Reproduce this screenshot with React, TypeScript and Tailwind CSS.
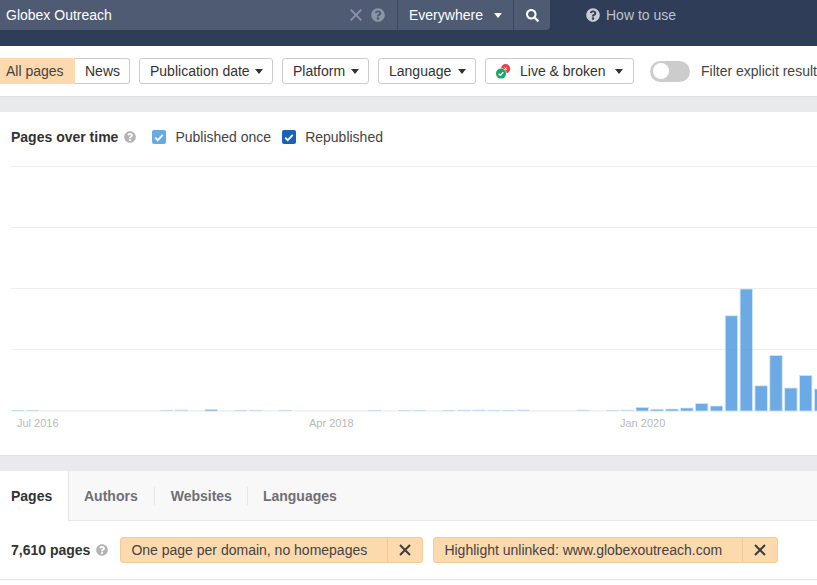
import { FaQuestionCircle, FaSearch } from "react-icons/fa";

const sans = "font-['Liberation_Sans',Arial,sans-serif]";

// [slot index, height above baseline]
const bars: [number, number][] = [
  [0, 1], [1, 1], [10, 1], [11, 1.4], [13, 1.6], [15, 1], [16, 1], [18, 1],
  [24, 1], [26, 1], [27, 1], [29, 1], [30, 1.2], [31, 1.4], [32, 1], [33, 1],
  [34, 1.4], [38, 1.2], [40, 1], [41, 1.2], [42, 3.6], [43, 1.8], [44, 2],
  [45, 3], [46, 7.6], [47, 5], [48, 95.2], [49, 122], [50, 25.2], [51, 55.6],
  [52, 23], [53, 35.6], [54, 22],
];

function Caret({ className = "border-t-[#333]" }: { className?: string }) {
  return <span className={`inline-block shrink-0 w-0 h-0 border-x-[4.5px] border-x-transparent border-t-[5px] ${className}`} />;
}

function FilterButton({ label, width }: { label: string; width: string }) {
  return (
    <button className={`h-[26px] pl-[10px] pr-[9px] flex items-center justify-between shrink-0 whitespace-nowrap bg-white border border-[#ccc] rounded-[3px] text-[14px] text-[#333] ${width}`}>
      {label}
      <Caret />
    </button>
  );
}

function LinkStatusIcon() {
  return (
    <svg width="16" height="15" viewBox="0 0 16 15" className="shrink-0">
      <circle cx="10.6" cy="4.7" r="4.6" fill="#e8414a" />
      <path d="M9.4 3.4l2.4 2.6M11.8 3.4L9.4 6" stroke="#fff" strokeWidth="1" fill="none" />
      <circle cx="6" cy="9.6" r="5.6" fill="#fff" />
      <circle cx="6" cy="9.6" r="5" fill="#14a86b" />
      <path d="M3.6 9.7l1.7 1.7 3-3.2" stroke="#fff" strokeWidth="1.3" fill="none" />
    </svg>
  );
}

function Checkbox({ className, label }: { className: string; label: string }) {
  return (
    <label className="flex items-center gap-[9px] text-[14px] text-[#444]">
      <span className={`w-[14px] h-[14px] rounded-[2px] flex items-center justify-center ${className}`}>
        <svg width="10" height="9" viewBox="0 0 10 9">
          <path d="M1.2 4.6l2.6 2.6 5-5.4" stroke="#fff" strokeWidth="1.8" fill="none" />
        </svg>
      </span>
      {label}
    </label>
  );
}

function Chip({ label, textWidth }: { label: string; textWidth: string }) {
  return (
    <div className="h-[26px] flex items-center bg-[#fdd9ae] border border-[#f3cb98] rounded-[3px] text-[14px] text-[#444]">
      <span className={`pl-[10px] whitespace-nowrap ${textWidth}`}>{label}</span>
      <span className="w-[35px] h-full flex items-center justify-center border-l border-[#f3cb98]">
        <svg width="12" height="12" viewBox="0 0 12 12">
          <path d="M1 1l10 10M11 1L1 11" stroke="#3c3c3c" strokeWidth="2" fill="none" />
        </svg>
      </span>
    </div>
  );
}

function Chart() {
  return (
    <svg width="817" height="293" viewBox="0 162 817 293" className="block">
      {[166, 227, 288, 349].map((y) => (
        <line key={y} x1="11" x2="817" y1={y + 0.5} y2={y + 0.5} stroke="#eeeeee" />
      ))}
      <rect x="11" y="410" width="806" height="1.8" fill="#f1f2f4" />
      {bars.map(([slot, h]) => (
        <rect
          key={slot}
          x={11.7 + slot * 14.865}
          y={411 - h}
          width="12.4"
          height={h}
          fill="#4a97de"
          fillOpacity={h < 1.5 ? 0.25 : 0.82}
          stroke="#d6e6f6"
          strokeWidth={h < 1.5 ? 0 : 0.8}
        />
      ))}
      <g fontSize="11" fill="#b9b9b9" fontFamily="'Liberation Sans', Arial, sans-serif">
        <text x="17" y="427">Jul 2016</text>
        <text x="309" y="427">Apr 2018</text>
        <text x="620" y="427">Jan 2020</text>
      </g>
    </svg>
  );
}

export default function App() {
  return (
    <div className={`w-[817px] h-[585px] overflow-hidden bg-white ${sans}`}>
      <header className="h-[46px] bg-[#2f3d58] text-[14px] flex items-start">
        <div className="w-[397px] h-[30px] bg-[#4f5b73] flex items-center pl-[6px] pr-[12px] text-white">
          <span className="flex-1">Globex Outreach</span>
          <svg width="12" height="12" viewBox="0 0 12 12" className="mr-[9px]">
            <path d="M0.7 0.7l10.6 10.6M11.3 0.7L0.7 11.3" stroke="#8d95a5" strokeWidth="1.8" fill="none" />
          </svg>
          <FaQuestionCircle className="text-[14px] text-[#8d95a5]" />
        </div>
        <div className="w-[117px] h-[30px] bg-[#4f5b73] border-x border-[#3a475f] flex items-center pl-[11px] gap-[11px] text-white">
          Everywhere
          <Caret className="border-t-white" />
        </div>
        <div className="w-[36px] h-[30px] bg-[#4f5b73] rounded-br-[4px] flex items-center justify-center text-white">
          <FaSearch className="text-[13px]" />
        </div>
        <div className="h-[30px] ml-[36px] flex items-center gap-[6px] text-[#bcc2cd]">
          <FaQuestionCircle className="text-[14px] text-[#c9cdd6]" />
          How to use
        </div>
      </header>

      <div className="h-[50px] flex items-center gap-[9px] text-[14px]">
        <div className="h-[26px] w-[130px] flex shrink-0">
          <span className="w-[75px] pl-[6px] flex items-center bg-[#fdd9ae] text-[#444]">All pages</span>
          <span className="w-[55px] pl-[10px] flex items-center bg-white border border-l-0 border-[#ccc] rounded-r-[3px] text-[#333]">News</span>
        </div>
        <FilterButton label="Publication date" width="w-[134px]" />
        <FilterButton label="Platform" width="w-[87px]" />
        <FilterButton label="Language" width="w-[98px]" />
        <button className="h-[26px] w-[149px] shrink-0 whitespace-nowrap pl-[9px] flex items-center gap-[9px] bg-white border border-[#ccc] rounded-[3px] text-[#333]">
          <LinkStatusIcon />
          Live &amp; broken
          <span className="flex"><Caret /></span>
        </button>
        <span className="ml-[7px] w-[40px] h-[21px] shrink-0 rounded-full bg-[#ccc] flex items-center pl-[3px]">
          <span className="w-[16px] h-[16px] rounded-full bg-white" />
        </span>
        <span className="ml-[2px] whitespace-nowrap text-[#444]">Filter explicit results</span>
      </div>

      <div className="h-[16px] bg-[#e9eaec] border-t border-[#e0e0e0]" />

      <section className="h-[343px]">
        <div className="h-[50px] pl-[11px] flex items-center gap-[16px]">
          <div className="h-[18px] flex items-center gap-[6px]">
            <span className="text-[14px] font-bold text-[#333]">Pages over time</span>
            <FaQuestionCircle className="text-[12px] text-[#b3b3b3]" />
          </div>
          <div className="h-[18px] flex items-center gap-[11px]">
            <Checkbox className="bg-[#6aaae4]" label="Published once" />
            <Checkbox className="bg-[#1a62b3]" label="Republished" />
          </div>
        </div>
        <Chart />
      </section>

      <div className="h-[16px] bg-[#e9eaec] border-t border-[#e0e0e0]" />

      <nav className="h-[50px] flex bg-[#f8f8f8] border-b border-[#e6e6e6] text-[14px] font-bold text-[#6f6f75]">
        <span className="w-[69px] h-[50px] pl-[11px] flex items-center bg-white border-r border-[#e6e6e6] text-[#333]">Pages</span>
        <div className="flex items-center pl-[15px]">
          <span className="pr-[16px] border-r border-[#e6e6e6] leading-[18px]">Authors</span>
          <span className="pl-[16px] pr-[15px] border-r border-[#e6e6e6] leading-[18px]">Websites</span>
          <span className="pl-[15px] leading-[18px]">Languages</span>
        </div>
      </nav>

      <div className="h-[59px] pl-[11px] flex items-center border-b border-[#e6e6e6]">
        <span className="text-[14px] font-bold text-[#333] whitespace-nowrap">7,610 pages</span>
        <FaQuestionCircle className="ml-[6px] mr-[12px] text-[12px] text-[#b3b3b3]" />
        <div className="flex gap-[10px]">
          <Chip label="One page per domain, no homepages" textWidth="w-[266px]" />
          <Chip label="Highlight unlinked: www.globexoutreach.com" textWidth="w-[308px]" />
        </div>
      </div>
    </div>
  );
}
